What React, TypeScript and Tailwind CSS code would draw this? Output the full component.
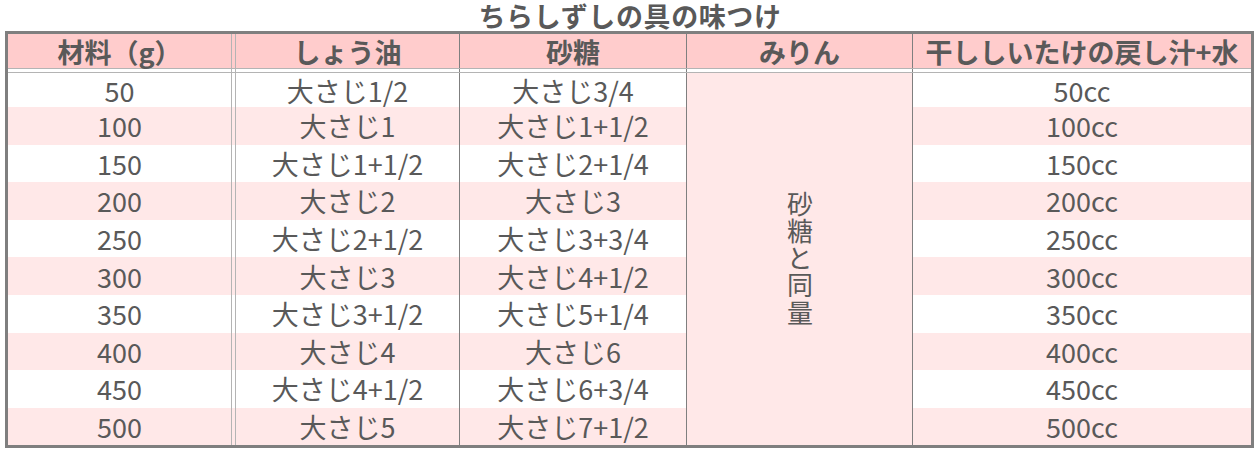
const rows = [
  ["50", "大さじ1/2", "大さじ3/4", "50cc"],
  ["100", "大さじ1", "大さじ1+1/2", "100cc"],
  ["150", "大さじ1+1/2", "大さじ2+1/4", "150cc"],
  ["200", "大さじ2", "大さじ3", "200cc"],
  ["250", "大さじ2+1/2", "大さじ3+3/4", "250cc"],
  ["300", "大さじ3", "大さじ4+1/2", "300cc"],
  ["350", "大さじ3+1/2", "大さじ5+1/4", "350cc"],
  ["400", "大さじ4", "大さじ6", "400cc"],
  ["450", "大さじ4+1/2", "大さじ6+3/4", "450cc"],
  ["500", "大さじ5", "大さじ7+1/2", "500cc"],
];

function rowClass(i: number) {
  return `${i === 0 ? "h-[34px]" : "h-[37.6px]"} ${i % 2 === 1 ? "bg-[#ffe8e8]" : "bg-white"}`;
}

export default function App() {
  return (
    <div className="w-[1260px] h-[456px] bg-white text-[#595959] font-['Noto_Sans_CJK_JP','Noto_Sans',sans-serif]">
      {/* title */}
      <div className="h-[31px] pt-[1px] flex items-center justify-center text-[27px] tracking-[0.6px] font-bold leading-[30px]">
        ちらしずしの具の味つけ
      </div>

      <div className="ml-[5px] w-[1249px] border-[3px] border-[#7f7f7f]">
        {/* header */}
        <div className="flex h-[35px] bg-[#ffcccc] border-b border-[#b4b4b4] text-[27px] font-bold leading-none">
          <div className="w-[224px] border-r border-[#b4b4b4] flex items-center justify-center">材料（g）</div>
          <div className="ml-[3px] w-[225px] border-l border-l-[#b4b4b4] border-r border-r-[#7f7f7f] flex items-center justify-center">しょう油</div>
          <div className="w-[227px] border-r border-[#7f7f7f] flex items-center justify-center">砂糖</div>
          <div className="w-[226px] border-r border-[#7f7f7f] flex items-center justify-center">みりん</div>
          <div className="flex-1 flex items-center justify-center">干ししいたけの戻し汁+水</div>
        </div>
        {/* double rule gap */}
        <div className="flex h-[4px] border-b border-[#b4b4b4]">
          <div className="w-[224px] border-r border-[#b4b4b4]" />
          <div className="ml-[3px] w-[225px] border-l border-l-[#b4b4b4] border-r border-r-[#7f7f7f]" />
          <div className="w-[227px] border-r border-[#7f7f7f]" />
          <div className="w-[226px] border-r border-[#7f7f7f]" />
          <div className="flex-1" />
        </div>

        {/* body */}
        <div className="flex text-[27px] leading-none">
          <div className="w-[679px] flex flex-col">
            {rows.map((r, i) => (
              <div key={r[0]} className={`flex ${rowClass(i)}`}>
                <div className="w-[224px] border-r border-[#b4b4b4] flex items-center justify-center">{r[0]}</div>
                <div className="ml-[3px] w-[225px] border-l border-l-[#b4b4b4] border-r border-r-[#7f7f7f] flex items-center justify-center">{r[1]}</div>
                <div className="w-[227px] border-r border-[#7f7f7f] flex items-center justify-center">{r[2]}</div>
              </div>
            ))}
          </div>

          {/* mirin: merged cell */}
          <div className="w-[226px] border-r border-[#7f7f7f] bg-[#ffe8e8] flex items-center justify-center">
            <span className="[writing-mode:vertical-rl] text-[26px] tracking-[1.2px] leading-none">砂糖と同量</span>
          </div>

          <div className="flex-1 flex flex-col">
            {rows.map((r, i) => (
              <div key={r[3]} className={`flex items-center justify-center ${rowClass(i)}`}>{r[3]}</div>
            ))}
          </div>
        </div>
      </div>
    </div>
  );
}
